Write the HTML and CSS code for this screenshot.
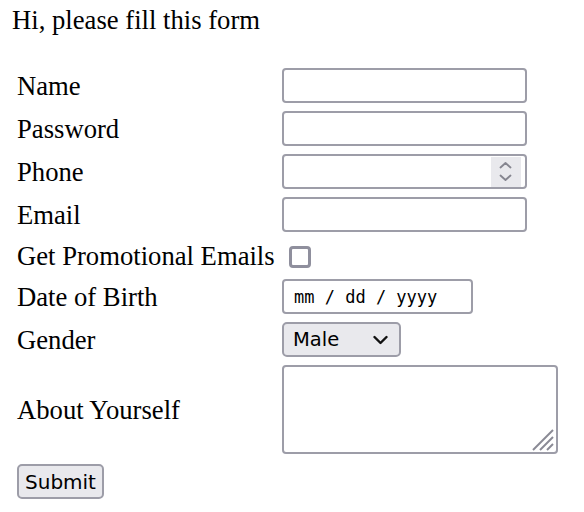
FILE: index.html
```html
<!DOCTYPE html>
<html lang="en">
<head>
<meta charset="utf-8">
<title>Form</title>
<link rel="stylesheet" href="styles.css">
</head>
<body class="page">
<p class="title">Hi, please fill this form</p>
<form class="form">
  <div class="grid">
    <label class="lbl" for="name">Name</label>
    <input class="field text" id="name" type="text">

    <label class="lbl" for="pw">Password</label>
    <input class="field text" id="pw" type="password">

    <label class="lbl" for="phone">Phone</label>
    <div class="field num">
      <input class="num-input" id="phone" type="text">
      <span class="spin">
        <svg width="30" height="30" viewBox="0 0 30 30" aria-hidden="true">
          <polyline points="9.5,10.5 14.5,6 19.5,10.5" fill="none" stroke="#85858f" stroke-width="1.8" stroke-linecap="round" stroke-linejoin="round"/>
          <polyline points="9.5,18.5 14.5,23 19.5,18.5" fill="none" stroke="#85858f" stroke-width="1.8" stroke-linecap="round" stroke-linejoin="round"/>
        </svg>
      </span>
    </div>

    <label class="lbl" for="email">Email</label>
    <input class="field text" id="email" type="text">

    <label class="lbl" for="promo">Get Promotional Emails</label>
    <input class="check" id="promo" type="checkbox">

    <label class="lbl" for="dob">Date of Birth</label>
    <input class="field date" id="dob" type="text" placeholder="mm / dd / yyyy">

    <label class="lbl" for="gender">Gender</label>
    <div class="select" id="gender">
      <span class="select-text">Male</span>
      <svg class="chev" width="15" height="10" viewBox="0 0 15 10" aria-hidden="true">
        <polyline points="1.5,2 7.5,8 13.5,2" fill="none" stroke="#111" stroke-width="2.4" stroke-linecap="round" stroke-linejoin="round"/>
      </svg>
    </div>

    <label class="lbl" for="about">About Yourself</label>
    <div class="ta-wrap">
      <textarea class="ta" id="about"></textarea>
      <svg class="resizer" width="24" height="24" viewBox="0 0 24 24" aria-hidden="true">
        <line x1="2" y1="22" x2="22" y2="2" stroke="#8a8a95" stroke-width="2"/>
        <line x1="9" y1="22" x2="22" y2="9" stroke="#8a8a95" stroke-width="2"/>
        <line x1="16" y1="22" x2="22" y2="16" stroke="#8a8a95" stroke-width="2"/>
      </svg>
    </div>
  </div>
  <div class="actions">
    <button class="btn" type="button">Submit</button>
  </div>
</form>
</body>
</html>
```
FILE: styles.css
```css
.page {
  margin: 0;
  background: #ffffff;
  color: #000000;
  font-family: "Liberation Serif", "Times New Roman", serif;
  font-size: 26.67px;
}

.title {
  margin: 0;
  padding: 5px 0 0 12px;
  line-height: 31px;
}

.form {
  margin: 32px 0 0 0;
}

.grid {
  display: grid;
  padding-left: 17px;
  grid-template-columns: 265px 1fr;
  grid-template-rows: 35px 35px 35px 35px 31px 35px 35px 89px;
  row-gap: 8px;
  align-items: center;
}

.lbl {
  line-height: 31px;
  white-space: nowrap;
  padding-top: 1px;
}

.field {
  box-sizing: border-box;
  height: 35px;
  margin: 0;
  border: 2px solid #9d9da8;
  border-radius: 4px;
  background: #ffffff;
  justify-self: start;
  outline: none;
}

.text {
  width: 245px;
  padding: 0 8px;
  font-family: "DejaVu Sans", sans-serif;
  font-size: 19px;
}

.num {
  width: 245px;
  display: flex;
  align-items: center;
  padding: 0 4px 0 8px;
}

.num-input {
  flex: 1;
  min-width: 0;
  border: none;
  outline: none;
  padding: 0;
  background: transparent;
  font-family: "DejaVu Sans", sans-serif;
  font-size: 19px;
}

.spin {
  display: flex;
  width: 30px;
  height: 30px;
  background: #e9e9ed;
}

.check {
  appearance: none;
  -webkit-appearance: none;
  box-sizing: border-box;
  width: 22px;
  height: 22px;
  margin: 2px 0 0 7px;
  border: 3px solid #8f8f9d;
  border-radius: 4px;
  background: #ffffff;
  justify-self: start;
}

.date {
  width: 191px;
  padding: 0 0 0 10px;
  font-family: "DejaVu Sans Mono", monospace;
  font-size: 17px;
  color: #000;
}

.date::placeholder {
  color: #000000;
  opacity: 1;
}

.select {
  box-sizing: border-box;
  width: 119px;
  height: 35px;
  display: flex;
  align-items: center;
  justify-content: space-between;
  padding: 0 11px 0 9px;
  border: 2px solid #9d9da8;
  border-radius: 5px;
  background: #e9e9ed;
  justify-self: start;
  font-family: "DejaVu Sans", sans-serif;
  font-size: 19.5px;
}

.select-text {
  line-height: 1;
  margin-top: 1px;
}

.chev {
  display: block;
  margin-top: 1px;
}

.ta-wrap {
  position: relative;
  width: 276px;
  height: 89px;
  justify-self: start;
}

.ta {
  box-sizing: border-box;
  display: block;
  width: 100%;
  height: 100%;
  margin: 0;
  border: 2px solid #9d9da8;
  border-radius: 4px;
  resize: none;
  outline: none;
  background: #ffffff;
}

.resizer {
  position: absolute;
  right: 3px;
  bottom: 2px;
}

.actions {
  padding-left: 17px;
  margin-top: 10px;
}

.btn {
  box-sizing: border-box;
  height: 35px;
  width: 87px;
  margin: 0;
  padding: 0;
  border: 2px solid #9d9da8;
  border-radius: 5px;
  background: #e9e9ed;
  color: #000000;
  font-family: "DejaVu Sans", sans-serif;
  font-size: 20px;
}
```
